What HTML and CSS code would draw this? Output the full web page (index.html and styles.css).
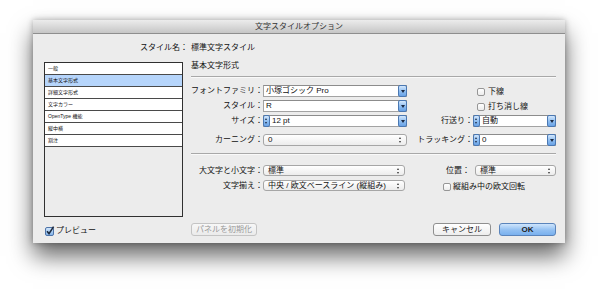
FILE: index.html
```html
<!DOCTYPE html>
<html lang="ja">
<head>
    <meta charset="UTF-8">
    <title>文字スタイルオプション</title>
    <link rel="stylesheet" href="styles.css">
</head>
<body>
    <div class="window">
        <div class="titlebar">文字スタイルオプション</div>
        <div class="window-body">
            <div class="style-name">
                <span class="style-name-label">スタイル名：</span>
                <span class="style-name-value">標準文字スタイル</span>
            </div>
            <div class="main">
                <div class="sidebar">
                    <ul class="category-list">
                        <li>一般</li>
                        <li class="selected">基本文字形式</li>
                        <li>詳細文字形式</li>
                        <li>文字カラー</li>
                        <li>OpenType 機能</li>
                        <li>縦中横</li>
                        <li>割注</li>
                    </ul>
                    <div class="check preview">
                        <svg class="checkmark" width="10" height="10" viewBox="0 0 10 10">
                            <defs>
                                <linearGradient id="cb" x1="0" y1="0" x2="0" y2="1">
                                    <stop offset="0" stop-color="#d6e9fc"/>
                                    <stop offset="1" stop-color="#7fb2ea"/>
                                </linearGradient>
                            </defs>
                            <rect x="0.5" y="1.5" width="8" height="8" rx="1.5" fill="url(#cb)" stroke="#4f74a8"/>
                            <path d="M2 5.2 L4 7.6 L8.6 0.6" fill="none" stroke="#1d2b40" stroke-width="1.6"/>
                        </svg>
                        <span>プレビュー</span>
                    </div>
                </div>

                <div class="content">
                    <div class="section-title">基本文字形式</div>
                    <div class="divider"></div>

                    <div class="form-grid">
                        <span class="label">フォントファミリ：</span>
                        <div class="combo"><span class="value">小塚ゴシック Pro</span><span class="arrow"></span></div>
                        <span></span>
                        <div class="check small-check"><span class="box"></span>下線</div>

                        <span class="label">スタイル：</span>
                        <div class="combo"><span class="value">R</span><span class="arrow"></span></div>
                        <span></span>
                        <div class="check small-check"><span class="box"></span>打ち消し線</div>

                        <span class="label">サイズ：</span>
                        <div class="combo"><span class="stepper"></span><span class="value">12 pt</span><span class="arrow"></span></div>
                        <span class="label">行送り：</span>
                        <div class="combo"><span class="stepper"></span><span class="value">自動</span><span class="arrow"></span></div>

                        <span class="label">カーニング：</span>
                        <div class="popup"><span class="value">0</span><span class="updown"></span></div>
                        <span class="label">トラッキング：</span>
                        <div class="combo"><span class="stepper"></span><span class="value">0</span><span class="arrow"></span></div>
                    </div>

                    <div class="divider lower"></div>

                    <div class="lower-grid">
                        <span class="label">大文字と小文字：</span>
                        <div class="popup"><span class="value">標準</span><span class="updown"></span></div>
                        <span class="label">位置：</span>
                        <div class="popup pos"><span class="value">標準</span><span class="updown"></span></div>

                        <span class="label">文字揃え：</span>
                        <div class="popup"><span class="value">中央 / 欧文ベースライン (縦組み)</span><span class="updown"></span></div>
                        <div class="check rotate-check"><span class="box"></span>縦組み中の欧文回転</div>
                    </div>

                    <div class="footer">
                        <button class="btn reset" disabled>パネルを初期化</button>
                        <div class="footer-right">
                            <button class="btn cancel">キャンセル</button>
                            <button class="btn ok">OK</button>
                        </div>
                    </div>
                </div>
            </div>
        </div>
    </div>
</body>
</html>
```

FILE: styles.css
```css
* {
    margin: 0;
    padding: 0;
    box-sizing: border-box;
}

body {
    width: 599px;
    height: 292px;
    overflow: hidden;
    background: #fff;
    font-family: "Liberation Sans", "Noto Sans CJK JP", sans-serif;
    font-size: 8px;
    color: #111;
}

.window {
    margin: 20px 0 0 33px;
    width: 532px;
    height: 223px;
    background: #ececec;
    display: flex;
    flex-direction: column;
    box-shadow: 0 13px 22px rgba(0,0,0,0.6), 0 0 6px rgba(0,0,0,0.3);
}

.titlebar {
    height: 14px;
    line-height: 13px;
    text-align: center;
    color: #333;
    background: linear-gradient(#ececec, #c6c6c6);
    border-bottom: 1px solid #8e8e8e;
}

.window-body {
    flex: 1;
    display: flex;
    flex-direction: column;
    padding: 8px 9px 7px 11px;
}

.style-name {
    display: flex;
    height: 12px;
    line-height: 12px;
}

.style-name-label {
    width: 144px;
    text-align: right;
}

.style-name-value {
    margin-left: 3px;
}

.main {
    flex: 1;
    display: flex;
    gap: 8px;
    margin-top: 6px;
}

/* lista de la izquierda */
.sidebar {
    width: 139px;
    display: flex;
    flex-direction: column;
}

.category-list {
    list-style: none;
    margin-top: 2px;
    height: 155px;
    border: 1px solid #303030;
    background: #ececec;
}

.category-list li {
    height: 12px;
    line-height: 11px;
    padding-left: 3px;
    font-size: 5px;
    background: #fff;
    border-bottom: 1px solid #4a4a4a;
}

.category-list li.selected {
    background: #b6d5fb;
}

.check {
    display: flex;
    align-items: center;
    height: 10px;
    line-height: 10px;
}

.preview {
    margin-top: 9px;
    padding-left: 1px;
}

.preview .checkmark {
    margin-right: 1px;
}

.check .box {
    width: 8px;
    height: 8px;
    margin-right: 3px;
    border: 1px solid #969696;
    border-radius: 2px;
    background: linear-gradient(#fff, #ececec);
}

.small-check {
    padding-left: 4px;
}

/* formulario */
.content {
    flex: 1;
    display: flex;
    flex-direction: column;
}

.section-title {
    height: 12px;
    line-height: 12px;
}

.divider {
    height: 2px;
    margin-top: 4px;
    border-top: 1px solid #a8a8a8;
    border-bottom: 1px solid #f9f9f9;
}

.divider.lower {
    margin-top: 7px;
}

.form-grid {
    display: grid;
    grid-template-columns: 72px 144px 66px 83px;
    grid-template-rows: 12px 12px 12px 16px;
    row-gap: 3px;
    align-items: end;
    margin-top: 7px;
}

.label {
    text-align: right;
    line-height: 12px;
    white-space: nowrap;
}

.combo {
    display: flex;
    height: 12px;
    background: #fff;
    border: 1px solid #a3a3a3;
    border-top-color: #8c8c8c;
}

.combo .value {
    flex: 1;
    padding-left: 2px;
    line-height: 10px;
    white-space: nowrap;
}

.arrow,
.stepper {
    position: relative;
    height: 12px;
    margin-top: -1px;
    border: 1px solid #4a78b3;
    border-radius: 2px;
    background: linear-gradient(#d3e7fc, #8cbcf0 55%, #6aa3e6);
}

.arrow {
    width: 9px;
    margin-right: -1px;
}

.arrow::after {
    content: "";
    position: absolute;
    left: 2px;
    top: 4px;
    border-left: 2px solid transparent;
    border-right: 2px solid transparent;
    border-top: 3px solid #1b2a44;
}

.stepper {
    width: 7px;
    margin-left: -1px;
}

.stepper::before,
.stepper::after {
    content: "";
    position: absolute;
    left: 1px;
    border-left: 1.5px solid transparent;
    border-right: 1.5px solid transparent;
}

.stepper::before {
    top: 2px;
    border-bottom: 2px solid #1b2a44;
}

.stepper::after {
    top: 6px;
    border-top: 2px solid #1b2a44;
}

.popup {
    position: relative;
    display: flex;
    height: 12px;
    border: 1px solid #a6a6a6;
    border-radius: 3px;
    background: linear-gradient(#fff, #ececec);
}

.popup .value {
    flex: 1;
    padding-left: 4px;
    line-height: 10px;
    white-space: nowrap;
}

.updown {
    position: relative;
    width: 9px;
}

.updown::before,
.updown::after {
    content: "";
    position: absolute;
    left: 2px;
    border-left: 1.5px solid transparent;
    border-right: 1.5px solid transparent;
}

.updown::before {
    top: 2px;
    border-bottom: 2px solid #333;
}

.updown::after {
    top: 6px;
    border-top: 2px solid #333;
}

.lower-grid {
    display: grid;
    grid-template-columns: 72px 144px 66px 83px;
    grid-template-rows: 11px 11px;
    row-gap: 4px;
    align-items: center;
    margin-top: 10px;
}

.lower-grid .popup {
    height: 11px;
    margin-right: 2px;
}

.lower-grid .popup .value {
    line-height: 9px;
}

.lower-grid .label {
    line-height: 11px;
}

.lower-grid .label:nth-of-type(2) {
    padding-right: 3px;
}

.lower-grid .popup.pos {
    margin-right: 0;
    margin-left: 2px;
}

.rotate-check {
    grid-column: 3 / 5;
    padding-left: 36px;
    margin-top: 3px;
}

.rotate-check .box {
    margin-right: 2px;
}

/* botones */
.footer {
    margin-top: auto;
    display: flex;
    justify-content: space-between;
}

.footer-right {
    display: flex;
    gap: 8px;
}

.btn {
    height: 13px;
    font-family: inherit;
    font-size: 8px;
    line-height: 11px;
    color: #222;
    border: 1px solid #8f8f8f;
    border-radius: 3px;
    background: linear-gradient(#fff, #ededed);
}

.btn.reset {
    width: 66px;
    color: #9a9a9a;
    border-color: #c4c4c4;
    background: linear-gradient(#f7f7f7, #ebebeb);
}

.btn.cancel {
    width: 58px;
}

.btn.ok {
    width: 57px;
    font-weight: bold;
    border-color: #5a84bb;
    background: linear-gradient(#cfe5fc, #92c0f2 55%, #79b0ee);
}
```
